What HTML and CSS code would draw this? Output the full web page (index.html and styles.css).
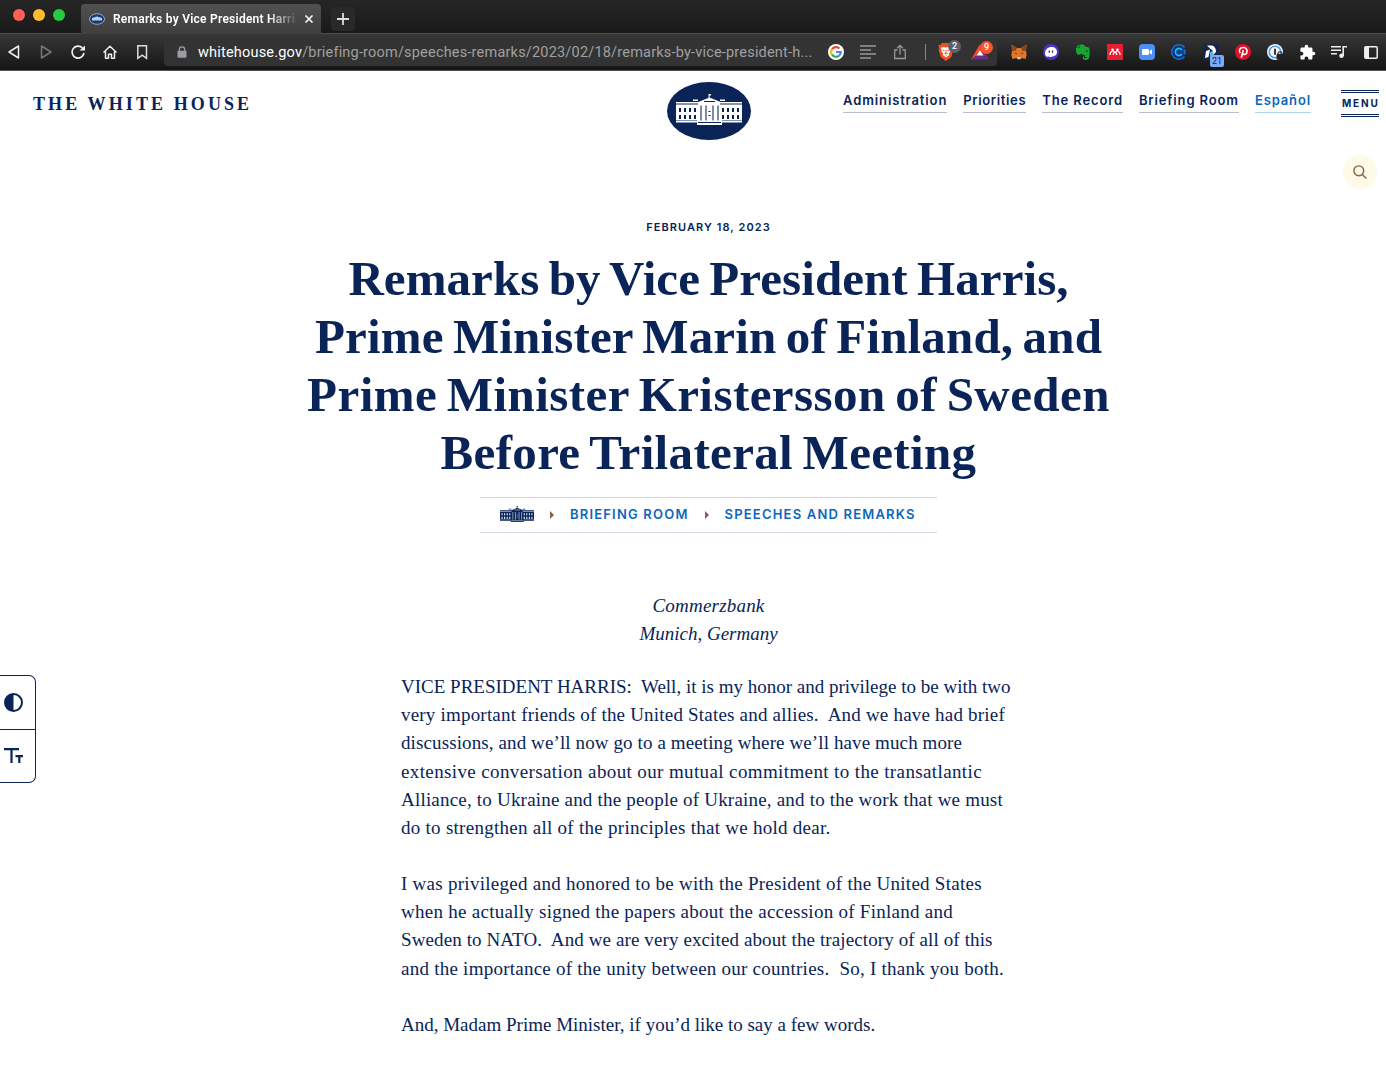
FILE: index.html
```html
<!DOCTYPE html>
<html lang="en">
<head>
<meta charset="utf-8">
<title>Remarks by Vice President Harris</title>
<link rel="stylesheet" href="styles.css">
</head>
<body>
<svg class="defs" width="0" height="0" aria-hidden="true">
  <symbol id="house" viewBox="0 0 66 31">
    <path fill="currentColor" d="M32.5 0h2.500v1.500h-1.500V4h-1z M21 8.500 33.500 3.500 46 8.500z M0 8h66v1.500H0z M17 5.500h5v1.500h-5z M44 5.500h5v1.500h-5z M0 10.500h66v16H0z M0 27h66v1.500H0z M21 26h25v5H21z M22 9h22v18H22z"/>
    <path fill="none" stroke="var(--cut)" stroke-width="2" stroke-dasharray="4 3" d="M4 14v11 M9 14v11 M14 14v11 M19 14v11 M47 14v11 M52 14v11 M57 14v11 M62 14v11"/>
    <path fill="none" stroke="var(--cut)" stroke-width="1.400" opacity=".75" d="M25 11.500v15 M30 11.500v15 M37 11.500v15 M42 11.500v15"/>
    <path fill="none" stroke="var(--cut)" stroke-width="1" d="M32.500 17.500h2 M32.500 21.500h2 M28 7.500h11 M22 28.500h23"/>
  </symbol>
</svg>

<div class="browser">
  <div class="tabs">
    <div class="lights"><i class="red"></i><i class="yellow"></i><i class="green"></i></div>
    <div class="tab">
      <svg width="16" height="12" viewBox="0 0 16 12"><ellipse cx="8" cy="6" rx="7.500" ry="5.300" fill="#173a78" stroke="#9aa6bb"/><path d="M3 5l5-1.500L13 5v2.500H3z" fill="#b9cbe6"/></svg>
      <span class="tab-title">Remarks by Vice President Harris,</span>
      <svg width="10" height="10" viewBox="0 0 10 10"><path d="M1.500 1.500l7 7M8.500 1.500l-7 7" stroke="#fff" stroke-width="1.600"/></svg>
    </div>
    <div class="new-tab"><svg width="12" height="12" viewBox="0 0 12 12"><path d="M6 0v12M0 6h12" stroke="#ddd" stroke-width="1.800"/></svg></div>
  </div>
  <div class="toolbar">
    <div class="cells">
      <span><svg width="20" height="20" viewBox="0 0 20 20"><path d="M14.500 4v12L5 10z" fill="none" stroke="#eee" stroke-width="1.500" stroke-linejoin="round"/></svg></span>
      <span><svg width="20" height="20" viewBox="0 0 20 20"><path d="M5.500 4v12L15 10z" fill="none" stroke="#777" stroke-width="1.500" stroke-linejoin="round"/></svg></span>
      <span><svg width="20" height="20" viewBox="0 0 20 20"><path d="M14.500 6A6 6 0 1 0 16 11" fill="none" stroke="#eee" stroke-width="1.700"/><path d="M11.500 8.500 17 8.500V3.500z" fill="#eee"/></svg></span>
      <span><svg width="20" height="20" viewBox="0 0 20 20"><path d="M3.500 10.500 10 4.200l6.500 6.300M5.500 9.500v6.800h3v-4h3v4h3V9.500" fill="none" stroke="#eee" stroke-width="1.500" stroke-linejoin="round"/></svg></span>
      <span><svg width="20" height="20" viewBox="0 0 20 20"><path d="M5.800 3.800h8.700v12.500l-4.300-3.200-4.400 3.200z" fill="none" stroke="#ddd" stroke-width="1.500"/></svg></span>
    </div>
    <div class="address">
      <svg class="lock" width="10" height="12" viewBox="0 0 10 12"><path d="M2.300 5V3.500a2.700 2.700 0 0 1 5.400 0V5" fill="none" stroke="#9a9da3" stroke-width="1.300"/><rect x=".5" y="4.700" width="9" height="7" rx="1" fill="#9a9da3"/></svg>
      <span class="url"><b>whitehouse.gov</b>/briefing-room/speeches-remarks/2023/02/18/remarks-by-vice-president-h...</span>
      <div class="cells actions">
        <span><svg width="16" height="16" viewBox="0 0 16 16"><circle cx="8" cy="8" r="8" fill="#fff"/><g fill="none" stroke-width="2.200"><path d="M4 5.300A4.800 4.800 0 0 1 11.400 4.600" stroke="#ea4335"/><path d="M4 5.200a4.800 4.800 0 0 0 0 5.600" stroke="#fbbc05"/><path d="M4 10.700a4.800 4.800 0 0 0 7.200.8" stroke="#34a853"/><path d="M8 8h4.800a4.800 4.800 0 0 1-1.600 3.500" stroke="#4285f4"/></g></svg></span>
        <span><svg width="16" height="14" viewBox="0 0 16 14"><path d="M0 1h16M0 5h11M0 9h16M0 13h11" stroke="#999" stroke-width="1.600"/></svg></span>
        <span><svg width="14" height="16" viewBox="0 0 14 16"><path d="M4.500 6H1.700v8.500h10.600V6H9.500M7 10.500V1.500M4 4.300l3-3 3 3" fill="none" stroke="#999" stroke-width="1.300"/></svg></span>
      </div>
      <i class="divider"></i>
      <div class="shields"><svg width="16" height="18" viewBox="0 0 16 18"><path d="M4 0h8l1.500 1.700 2 .3-.5 3 .3 2-2 7L8 18l-5.300-4L.7 7 1 5 .5 2l2-.3z" fill="#f4501e"/><path d="M3 4.500 6 4l2 .5L10 4l3 .5-.6 4-1.700 2 .5 1.500L8 14.500 4.800 12l.5-1.500-1.700-2z" fill="#fff"/><path d="M4.500 7l2 .7M11.500 7l-2 .7M8 7v3M6.300 11 8 10.200l1.700.8M8 12v1" stroke="#f4501e"/></svg><em class="grey">2</em></div>
      <div class="rewards"><svg width="18" height="16" viewBox="0 0 18 16"><path d="M9 0v6L5.500 11.500 0 15.500z" fill="#ff4724"/><path d="M9 0l9 15.500-5.500-4L9 6z" fill="#9e1f63"/><path d="M0 15.500l5.500-4h7l5.500 4z" fill="#662d91"/><path d="M9 6l3.500 5.500h-7z" fill="#fff"/></svg><em class="orange">9</em></div>
    </div>
    <div class="cells extensions">
      <span><svg width="16" height="16" viewBox="0 0 16 16"><path d="M.5.500 6 4h4L15.500.500 15 7l.7 4-1.200 4-4-1-1.500 1.500H7L5.500 14l-4 1L.3 11 1 7z" fill="#e27625"/><path d="M.5.500 6 4 4.500 7 1 7z M15.500.500 10 4l1.500 3 3.500 0z" fill="#8a4a20"/><path d="M3.500 8.500 6 9.500l-.8 1z M12.500 8.500 10 9.500l.8 1z" fill="#233447"/><path d="M6.500 13h3l.5 2H6z" fill="#d5bfb2"/></svg></span>
      <span><svg width="16" height="16" viewBox="0 0 16 16"><circle cx="8" cy="8" r="8" fill="#4b35c4"/><path d="M2 9.500C2 5.500 5 3 8.500 3s5.500 2 5.500 5-2.500 4.500-5 4.500c-1.500.8-2.500.5-3.500 0C3.500 13 2 12 2 9.500z" fill="#fff"/><path d="M6.300 6.500v2.200M9.500 6.500v2.200" stroke="#332099" stroke-width="1.300"/></svg></span>
      <span><svg width="16" height="16" viewBox="0 0 16 16"><path d="M4.500.800V4H1C.5 7 1.500 10 3 10.500c2 .5 3.200 0 3.500-1 1 1.200 2 1.500 3.500 1.500v2h1.500v1H9.500c-1 0-1.200-2.300.2-2.500-3 .5-2.700 4.500 1 4.500 3.500 0 4.300-3 3.800-11-.2-1.600-1.500-2-4-2.200C9.500 1 8.500.400 7 .4z M4 .8.800 3.500H4z" fill="#16a532"/><path d="M11 6.500h1.500v1.200H11z" fill="#242424"/></svg></span>
      <span><svg width="16" height="16" viewBox="0 0 16 16"><path d="M0 0h16v16H0z" fill="#e71f30"/><path d="M3 11V9.800Q3 8 5 7.300M13 11V9.800Q13 8 11 7.300M5.500 6.800 8 8.500l2.500-1.700M6.400 11V9.500L8 8l1.600 1.500V11" fill="none" stroke="#fff" stroke-width="1.300"/><circle cx="5.500" cy="5.800" r="1.300" fill="#fff"/><circle cx="10.500" cy="5.800" r="1.300" fill="#fff"/></svg></span>
      <span><svg width="16" height="16" viewBox="0 0 16 16"><rect width="16" height="16" rx="4" fill="#4a90f5"/><rect x="3" y="5" width="7" height="6" rx="1.300" fill="#fff"/><path d="M10.500 7.300 13 5.300v5.400L10.500 8.700z" fill="#fff"/></svg></span>
      <span><svg width="16" height="16" viewBox="0 0 16 16"><path d="M13.500 3.400A7.200 7.200 0 1 0 13.500 12.600" fill="none" stroke="#146ee0" stroke-width="1.500"/><circle cx="8" cy="8" r="5.500" fill="#123e96"/><path d="M10.800 6A3.500 3.500 0 1 0 10.800 10" fill="none" stroke="#14c8ef" stroke-width="1.500"/><path d="M13 5.500q2 2.500 0 5" stroke="#146ee0" fill="none" stroke-width="1.500"/></svg></span>
      <span class="calendar"><svg width="16" height="16" viewBox="0 0 16 16"><path d="M0 0h16v16H0z" fill="#17254b"/><path d="M4 1.500h5q4 1 4 6.500l-3 3V7L7 4.500z M3 7l4-1.500L5.500 13 2 14z" fill="#fff"/><path d="M7 8l3-1 1 5H7z" fill="#58b8ef"/></svg><em>21</em></span>
      <span><svg width="16" height="16" viewBox="0 0 16 16"><circle cx="8" cy="8" r="8" fill="#e11029"/><path d="M5.300 9.200C3 6.500 5 3.500 8.300 3.500c3.200 0 4.600 3 3.400 5.300-1 2.200-3.300 2-3.900.8M8.300 6 6.300 13.800" fill="none" stroke="#fff" stroke-width="1.600"/></svg></span>
      <span><svg width="17" height="16" viewBox="0 0 17 16"><circle cx="8" cy="8" r="8" fill="#f4f7fa"/><circle cx="8" cy="8" r="5.800" fill="none" stroke="#4a9cec" stroke-width="1.500"/><path d="M8 4.800v6" stroke="#222" stroke-width="1.800"/><rect x="9.500" y="10" width="7" height="5.500" rx="1" fill="#222"/><path d="M11 10V9q2-2.500 4 0v1" fill="none" stroke="#222" stroke-width="1.200"/></svg></span>
      <span><svg width="17" height="17" viewBox="0 0 24 24"><path fill="#fff" d="M20.500 11H19V7c0-1.100-.9-2-2-2h-4V3.500a2.500 2.500 0 0 0-5 0V5H4c-1.100 0-2 .9-2 2v3.800h1.500a2.700 2.700 0 0 1 0 5.400H2V20c0 1.100.9 2 2 2h3.800v-1.500a2.700 2.700 0 0 1 5.400 0V22H17c1.100 0 2-.9 2-2v-4h1.500a2.500 2.500 0 0 0 0-5z"/></svg></span>
      <span><svg width="16" height="14" viewBox="0 0 16 14"><path d="M0 1.800h10M0 5.300h10M0 8.800h6M12.200 11V1.800H16" fill="none" stroke="#eee" stroke-width="1.600"/><circle cx="10.500" cy="10.800" r="2.300" fill="#eee"/></svg></span>
      <span><svg width="14" height="13" viewBox="0 0 14 13"><rect x=".8" y=".8" width="12.400" height="11.400" rx="1" fill="none" stroke="#eee" stroke-width="1.500"/><path d="M1 1h4v11H1z" fill="#eee"/></svg></span>
    </div>
  </div>
</div>

<header class="site-header">
  <div class="brand">THE WHITE HOUSE</div>
  <div class="seal"><svg width="66" height="31"><use href="#house"/></svg></div>
  <nav>
    <a>Administration</a><a class="snug">Priorities</a><a>The Record</a><a>Briefing Room</a><a class="alt">Español</a>
  </nav>
  <div class="menu"><span>MENU</span></div>
</header>
<div class="search-row"><div class="search"><svg width="14" height="14" viewBox="0 0 14 14"><circle cx="5.800" cy="5.800" r="4.900" fill="none" stroke="#83604f" stroke-width="1.400"/><path d="M9.400 9.400l4 4" stroke="#83604f" stroke-width="1.400"/></svg></div></div>

<main>
  <div class="date">FEBRUARY 18, 2023</div>
  <h1>
    <span class="t1">Remarks by Vice President Harris,</span><br>
    <span class="t2">Prime Minister Marin of Finland, and</span><br>
    <span class="t3">Prime Minister Kristersson of Sweden</span><br>
    <span class="t4">Before Trilateral Meeting</span>
  </h1>
  <div class="crumbs">
    <svg class="crumb-home" width="34" height="16"><use href="#house"/></svg>
    <i class="arrow"></i><a>BRIEFING ROOM</a>
    <i class="arrow"></i><a>SPEECHES AND REMARKS</a>
  </div>
  <article>
    <p class="place"><span class="s2">Commerzbank</span><br><span>Munich, Germany</span></p>
    <p>
      <span>VICE PRESIDENT HARRIS:&nbsp; Well, it is my honor and privilege to be with two</span><br>
      <span class="s2">very important friends of the United States and allies.&nbsp; And we have had brief</span><br>
      <span class="s1">discussions, and we’ll now go to a meeting where we’ll have much more</span><br>
      <span class="s4">extensive conversation about our mutual commitment to the transatlantic</span><br>
      <span class="s2">Alliance, to Ukraine and the people of Ukraine, and to the work that we must</span><br>
      <span class="s3">do to strengthen all of the principles that we hold dear.</span>
    </p>
    <p>
      <span class="s3">I was privileged and honored to be with the President of the United States</span><br>
      <span class="s3">when he actually signed the papers about the accession of Finland and</span><br>
      <span class="s1">Sweden to NATO.&nbsp; And we are very excited about the trajectory of all of this</span><br>
      <span class="s25">and the importance of the unity between our countries.&nbsp; So, I thank you both.</span>
    </p>
    <p><span>And, Madam Prime Minister, if you’d like to say a few words.</span></p>
  </article>
</main>

<aside class="tools">
  <div><svg width="20" height="20" viewBox="0 0 20 20"><circle cx="9.500" cy="9.500" r="8.500" fill="none" stroke="#0a2458" stroke-width="2"/><path d="M9.500 1v17a8.500 8.500 0 0 1 0-17z" fill="#0a2458"/></svg></div>
  <div><svg width="20" height="16" viewBox="0 0 20 16"><path d="M0 1.200h15M7.500 1.200V15M11.500 8.200H19M15.300 8.200V15" fill="none" stroke="#0a2458" stroke-width="2.200"/></svg></div>
</aside>
</body>
</html>
```
FILE: styles.css
```css
* { box-sizing: border-box; }
body { margin: 0; height: 1073px; overflow: hidden; background: #fff; color: #0a2458; font-family: "Liberation Serif", serif; position: relative; }
svg { display: block; flex: none; }
.defs { position: absolute; }
.browser { height: 71px; background: #1c1c1c; font-family: Roboto, sans-serif; border-bottom: 1px solid #555; }
.tabs { height: 34px; display: flex; align-items: flex-end; background: linear-gradient(#262626, #191919); border-bottom: 1px solid #4c4c4c; }
.lights { width: 81px; height: 33px; padding: 9px 0 0 13px; display: flex; gap: 8px; }
.lights i { width: 12px; height: 12px; border-radius: 50%; }
.red { background: #ff5f57; }
.yellow { background: #febc2e; }
.green { background: #28c840; }
.tab { width: 240px; height: 30px; margin-bottom: -1px; padding: 0 7px 0 8px; display: flex; align-items: center; background: linear-gradient(#515151, #3e3e3e); border-radius: 4px 4px 0 0; }
.tab-title { width: 183px; margin: 0 8px; overflow: hidden; white-space: nowrap; color: #fff; font-size: 12px; font-weight: 600; letter-spacing: .25px; -webkit-mask-image: linear-gradient(90deg, #000 155px, transparent 186px); }
.new-tab { width: 24px; height: 24px; margin: 0 0 2px 10px; border-radius: 4px; background: #292929; display: grid; place-items: center; }
.toolbar { height: 36px; display: flex; align-items: center; background: linear-gradient(#373737, #151515); }
.cells { display: flex; }
.cells > span { width: 32px; height: 32px; display: grid; place-items: center; position: relative; }
.toolbar > .cells:first-child { margin-left: -2px; }
.address { width: 833px; height: 28px; margin-left: 6px; padding-left: 13px; border-radius: 4px; background: #333; display: flex; align-items: center; color: #a0a0a0; font-size: 14.5px; letter-spacing: .196px; }
.url { width: 616px; margin-left: 11px; white-space: nowrap; }
.url b { color: #fff; font-weight: 400; }
.actions { margin-left: 6px; }
.divider { width: 1px; height: 16px; margin: 0 12px 0 9px; background: #888; }
.shields, .rewards { position: relative; width: 33px; }
.rewards { width: 26px; }
.address em { position: absolute; width: 13px; height: 13px; border-radius: 50%; color: #fff; font: 500 9px/13px Roboto, sans-serif; letter-spacing: 0; text-align: center; }
.shields em { left: 10px; top: -3px; background: #5c6070; }
.rewards em { left: 9px; top: -3px; background: #fb542b; }
.extensions { margin-left: 6px; }
.calendar em { position: absolute; right: 3px; bottom: 1px; width: 14px; height: 12px; border-radius: 2px; background: #7eaaf5; color: #1b2540; font: 9px/12px Roboto, sans-serif; text-align: center; }

.site-header { height: 84px; padding: 11px 7px 0 33px; display: flex; align-items: flex-start; }
.brand { width: 634px; padding-top: 12px; font-size: 18px; line-height: 20px; font-weight: 700; letter-spacing: 3.1px; white-space: nowrap; }
.seal { width: 84px; height: 58px; padding-bottom: 3px; border-radius: 50%; background: #0a2458; color: #fff; --cut: #0a2458; display: grid; place-items: center; }
nav { margin: 8px 30px 0 auto; display: flex; gap: 16px; font: 600 13px/20px Inter, sans-serif; letter-spacing: .87px; white-space: nowrap; }
nav a { height: 23px; border-bottom: 1px solid #b8bfd2; }
nav .snug { letter-spacing: .65px; }
nav .alt { color: #0b67bd; border-color: #b3d3ee; }
.menu { width: 38px; height: 27px; margin-top: 8px; padding: 1px 0; border-top: 1px solid #0a2458; border-bottom: 1px solid #0a2458; }
.menu span { display: block; height: 23px; padding-left: 1px; border-top: 1px solid #0a2458; border-bottom: 1px solid #0a2458; font: 700 10px/21px Inter, sans-serif; letter-spacing: 1.8px; }
.search-row { height: 34px; padding-right: 9px; display: flex; justify-content: flex-end; }
.search { width: 34px; height: 34px; border-radius: 50%; background: #fff9e8; display: grid; place-items: center; }

main { padding-left: 31px; }
.date { height: 61px; padding-top: 28px; text-align: center; font: 600 11px/20px Inter, sans-serif; letter-spacing: 1.07px; }
h1 { margin: 0; font-size: 49px; line-height: 58px; font-weight: 700; word-spacing: -3px; text-align: center; white-space: nowrap; }
.t1 { letter-spacing: .07px; }
.t2 { letter-spacing: .15px; }
.t3 { letter-spacing: .43px; }
.t4 { letter-spacing: .34px; }
.crumbs { width: 457px; height: 36px; margin: 15px auto 0; padding-left: 20px; display: flex; align-items: center; border: solid #d3d5e2; border-width: 1px 0; font: 600 13px/20px Inter, sans-serif; letter-spacing: 1.19px; color: #0b67bd; white-space: nowrap; }
.crumbs a { padding-bottom: 2px; }
.crumb-home { color: #0a2458; --cut: #fff; margin-bottom: 2px; }
.arrow { margin: 0 16px; border: solid transparent; border-width: 4px 0 4px 4px; border-left-color: #83604f; }
article { width: 615px; margin: 59px auto 0; font-size: 19px; line-height: 28.2px; white-space: nowrap; }
article p { margin: 0 0 27.8px; }
article .place { margin-bottom: 24.5px; text-align: center; font-style: italic; }
.s1 { letter-spacing: .11px; }
.s2 { letter-spacing: .2px; }
.s25 { letter-spacing: .245px; }
.s3 { letter-spacing: .27px; }
.s4 { letter-spacing: .38px; }

.tools { position: absolute; left: 0; top: 675px; width: 36px; height: 108px; border: 1px solid #0a2458; border-left: 0; border-radius: 0 7px 7px 0; background: #fff; }
.tools div { height: 53px; padding-left: 4px; display: flex; align-items: center; }
.tools div + div { border-top: 1px solid #0a2458; }
```
